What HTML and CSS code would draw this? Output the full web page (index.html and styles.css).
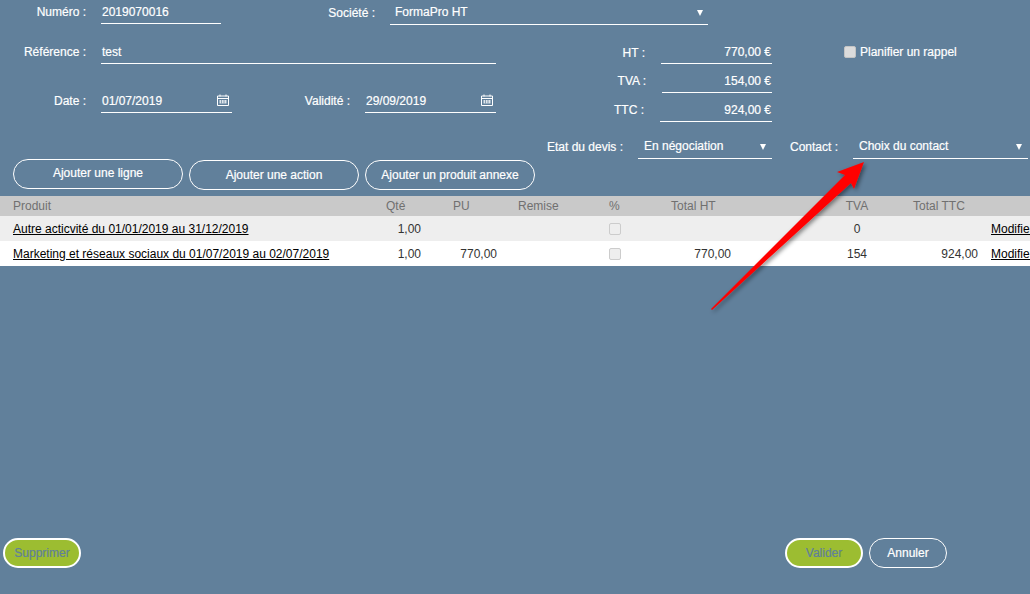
FILE: index.html
```html
<!DOCTYPE html>
<html lang="fr">
<head>
    <meta charset="UTF-8">
    <title>Devis</title>
    <link rel="stylesheet" href="styles.css">
</head>
<body>

<div class="row row-first">
    <span class="lbl lbl-main">Numéro :</span>
    <span class="field field-num">2019070016</span>
    <span class="lbl lbl-societe">Société :</span>
    <span class="field field-select field-societe">FormaPro HT<i class="caret"></i></span>
</div>

<div class="middle">
    <div class="left-col">
        <div class="row row-ref">
            <span class="lbl lbl-main">Référence :</span>
            <span class="field field-ref">test</span>
        </div>
        <div class="row row-date">
            <span class="lbl lbl-main">Date :</span>
            <span class="field field-date">01/07/2019
                <svg class="cal" viewBox="0 0 14 14"><use href="#cal"/></svg>
            </span>
            <span class="lbl lbl-validite">Validité :</span>
            <span class="field field-validite">29/09/2019
                <svg class="cal" viewBox="0 0 14 14"><use href="#cal"/></svg>
            </span>
        </div>
    </div>
    <div class="totals">
        <div class="total"><span class="lbl lbl-ht">HT :</span><span class="field amount amount-ht">770,00 €</span></div>
        <div class="total"><span class="lbl">TVA :</span><span class="field amount amount-tva">154,00 €</span></div>
        <div class="total"><span class="lbl">TTC :</span><span class="field amount amount-ttc">924,00 €</span></div>
    </div>
    <label class="rappel"><i class="check"></i>Planifier un rappel</label>
</div>

<div class="row row-status">
    <span class="lbl lbl-etat">Etat du devis :</span>
    <span class="field field-select field-etat">En négociation<i class="caret"></i></span>
    <span class="lbl lbl-contact">Contact :</span>
    <span class="field field-select field-contact">Choix du contact<i class="caret"></i></span>
</div>

<div class="actions">
    <button class="btn btn-add btn-first">Ajouter une ligne</button>
    <button class="btn btn-add">Ajouter une action</button>
    <button class="btn btn-add">Ajouter un produit annexe</button>
</div>

<table class="lines">
    <colgroup>
        <col class="c-prod"><col class="c-qte"><col class="c-pu"><col class="c-rem"><col class="c-pct">
        <col class="c-ht"><col class="c-tva"><col class="c-ttc"><col class="c-act">
    </colgroup>
    <thead>
        <tr>
            <th class="t-prod">Produit</th><th class="t-qte">Qté</th><th class="t-pu">PU</th><th class="t-rem">Remise</th>
            <th class="t-pct">%</th><th class="t-ht">Total HT</th><th class="t-tva">TVA</th><th class="t-ttc">Total TTC</th><th></th>
        </tr>
    </thead>
    <tbody>
        <tr>
            <td class="t-prod"><a href="#">Autre acticvité du 01/01/2019 au 31/12/2019</a></td>
            <td class="num">1,00</td><td class="num"></td><td></td>
            <td class="t-pct"><i class="check check-off"></i></td>
            <td class="num num-ht"></td><td class="t-tva">0</td><td class="num"></td>
            <td class="t-act"><a href="#">Modifier</a></td>
        </tr>
        <tr>
            <td class="t-prod"><a href="#">Marketing et réseaux sociaux du 01/07/2019 au 02/07/2019</a></td>
            <td class="num">1,00</td><td class="num">770,00</td><td></td>
            <td class="t-pct"><i class="check check-off"></i></td>
            <td class="num num-ht">770,00</td><td class="t-tva">154</td><td class="num">924,00</td>
            <td class="t-act"><a href="#">Modifier</a></td>
        </tr>
    </tbody>
</table>

<div class="footer">
    <button class="btn btn-green">Supprimer</button>
    <div class="footer-right">
        <button class="btn btn-green">Valider</button>
        <button class="btn btn-cancel">Annuler</button>
    </div>
</div>

<!-- fleche rouge par dessus la page -->
<svg class="arrow" viewBox="0 0 1030 594">
    <defs>
        <filter id="shadow" x="-20%" y="-20%" width="140%" height="140%">
            <feDropShadow dx="2" dy="2" stdDeviation="2" flood-color="#000" flood-opacity="0.45"/>
        </filter>
    </defs>
    <polygon points="711,309 845,175 837,172 864,162 854,189 851,183 712,310" fill="#ff0000" filter="url(#shadow)"/>
</svg>

<svg class="defs" width="0" height="0">
    <symbol id="cal" viewBox="0 0 14 14">
        <path d="M1.5 3h11v9.5h-11z M1.5 5.5h11" fill="none" stroke="#fff" stroke-width="1"/>
        <path d="M4 1.5v2 M10 1.5v2" stroke="#fff" stroke-width="1"/>
        <path d="M3.5 7h7v3.5h-7z" fill="#dfe6ec"/>
        <path d="M5.5 7v3.5 M8 7v3.5" stroke="#61809b" stroke-width="0.7"/>
    </symbol>
</svg>

</body>
</html>
```

FILE: styles.css
```css
/* Reset */
* {
    margin: 0;
    padding: 0;
    box-sizing: border-box;
}

html, body {
    height: 594px;
    overflow: hidden;
}

body {
    position: relative;
    display: flex;
    flex-direction: column;
    font-family: 'Liberation Sans', Arial, sans-serif;
    font-size: 12px;
    background: #61809b;
    color: #fff;
    -webkit-text-stroke: 0.2px currentColor;
}

/* Ligne de formulaire */
.row {
    display: flex;
    align-items: flex-end;
}

.lbl {
    white-space: nowrap;
    text-align: right;
    padding-bottom: 5px;
}

.lbl-main {
    width: 86px;
    margin-right: 15px;
}

.field {
    position: relative;
    display: block;
    height: 25px;
    padding: 6px 1px 0;
    border-bottom: 1px solid #fff;
    white-space: nowrap;
}

.row-first {
    height: 25px;
}

.row-first .lbl-main {
    padding-bottom: 6px;
}

.field-num {
    width: 120px;
    height: 24px;
    margin-bottom: 1px;
    padding-top: 5px;
}

.lbl-societe {
    width: 154px;
    margin-right: 15px;
}

.field-societe {
    width: 318px;
    padding-left: 5px;
    padding-top: 5px;
}

.field-select .caret {
    position: absolute;
    top: 10px;
    right: 6px;
    border-left: 3px solid transparent;
    border-right: 3px solid transparent;
    border-top: 6px solid #fff;
}

.field-societe .caret {
    right: 5px;
}

.middle {
    display: flex;
    height: 83px;
    margin-top: 14px;
}

.left-col {
    width: 496px;
}

.row-ref {
    height: 25px;
}

.field-ref {
    width: 395px;
}

.row-date {
    height: 25px;
    margin-top: 24px;
}

.field-date {
    width: 131px;
}

.lbl-validite {
    width: 118px;
    margin-right: 15px;
}

.field-validite {
    width: 131px;
}

.cal {
    position: absolute;
    right: 2px;
    top: 5px;
    width: 14px;
    height: 14px;
}

/* Totaux */
.totals {
    display: flex;
    flex-direction: column;
    gap: 4px;
    width: 276px;
}

.total {
    display: flex;
    justify-content: flex-end;
    align-items: flex-end;
    height: 25px;
}

.total .lbl {
    margin-right: 16px;
}

.total .lbl-ht {
    padding-bottom: 4px;
}

.amount {
    text-align: right;
    padding-right: 1px;
}

.amount-ht { width: 111px; }
.amount-tva { width: 110px; }
.amount-ttc { width: 112px; }

.rappel {
    display: flex;
    align-items: center;
    gap: 4px;
    height: 25px;
    margin-left: 72px;
    padding-top: 1px;
    white-space: nowrap;
}

.check {
    display: block;
    width: 12px;
    height: 12px;
    background: #dcdcdc;
    border: 1px solid #c4c4c4;
    border-radius: 2px;
}

.check-off {
    background: #eee;
    border-color: #ccc;
}

/* Etat + contact */
.row-status {
    height: 25px;
    margin-top: 12px;
}

.lbl-etat {
    width: 623px;
    margin-right: 15px;
}

.field-etat {
    width: 134px;
    padding-left: 6px;
    padding-top: 5px;
}

.lbl-contact {
    width: 66px;
    margin-right: 15px;
}

.field-contact {
    width: 175px;
    padding-left: 6px;
    padding-top: 5px;
}

/* Boutons */
.btn {
    display: block;
    height: 30px;
    border: 1px solid #fff;
    border-radius: 15px;
    background: transparent;
    color: #fff;
    font-family: inherit;
    font-size: 12px;
    cursor: pointer;
}

.actions {
    display: flex;
    gap: 6px;
    align-items: flex-start;
    height: 36px;
    padding-left: 13px;
    margin-top: 1px;
}

.btn-add {
    width: 170px;
}

.btn-first {
    margin-top: -1px;
    padding-bottom: 2px;
}

/* Tableau */
.lines {
    width: 1035px;
    table-layout: fixed;
    border-collapse: collapse;
    color: #333;
    -webkit-text-stroke: 0;
}

.c-prod { width: 381px; }
.c-qte { width: 45px; }
.c-pu { width: 76px; }
.c-rem { width: 102px; }
.c-pct { width: 22px; }
.c-ht { width: 180px; }
.c-tva { width: 102px; }
.c-ttc { width: 75px; }
.c-act { width: 52px; }

.lines th {
    height: 20px;
    background: #c9c9c9;
    color: #707070;
    font-weight: normal;
    text-align: left;
}

.lines td {
    height: 25px;
    white-space: nowrap;
}

.lines tbody tr:nth-child(odd) { background: #eee; }
.lines tbody tr:nth-child(even) { background: #fff; }

.lines a {
    color: #000;
}

.t-prod { padding-left: 13px; }
.t-qte { padding-left: 5px; }
.t-pu { padding-left: 27px; }
.t-rem { padding-left: 16px; }
.t-pct { padding-left: 5px; }
.t-ht { padding-left: 45px; }
.lines .t-tva { text-align: center; }
.t-ttc { padding-left: 5px; }
.t-act { padding-left: 8px; }

.num {
    text-align: right;
    padding-right: 5px;
}

.num-ht {
    padding-right: 75px;
}

/* Bas de page */
.footer {
    display: flex;
    justify-content: space-between;
    margin-top: auto;
    padding: 0 83px 26px 3px;
}

.footer-right {
    display: flex;
    gap: 6px;
}

.footer .btn {
    width: 78px;
}

.btn-green {
    background: #9cbd31;
    border: 2px solid #fff;
    color: #61809b;
    -webkit-text-stroke: 0.2px currentColor;
}

/* Fleche */
.arrow {
    position: absolute;
    left: 0;
    top: 0;
    width: 1030px;
    height: 594px;
    pointer-events: none;
}

.defs {
    position: absolute;
}
```
